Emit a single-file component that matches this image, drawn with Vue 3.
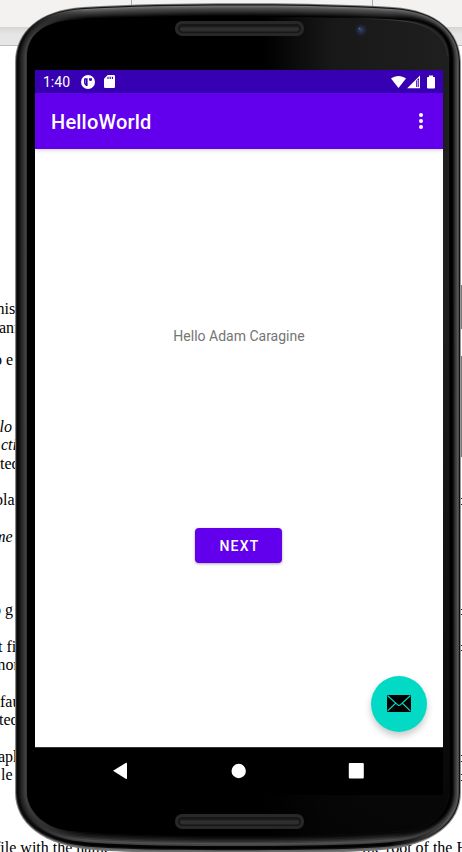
<script setup>
// Document lines: text, gap above the line, horizontal offset, italic flag
const lines = [
  { t: 'this', g: 0, x: -8 },
  { t: 'ann', g: 0, x: -1 },
  { t: 'o e', g: 14, x: -6 },
  { t: 'llo', g: 48, x: -5, i: true },
  { t: 'cti', g: 0, x: 1, i: true },
  { t: 'ted', g: 0, x: 0 },
  { t: 'pla', g: 18, x: -5 },
  { t: 'me', g: 18, x: -6, i: true },
  { t: 'o g', g: 55, x: -7 },
  { t: 't fi', g: 18, x: -2 },
  { t: 'mor', g: 0, x: -7 },
  { t: 'fau', g: 18, x: 0 },
  { t: 'ted', g: 0, x: -1 },
  { t: 'apk', g: 18, x: -2 },
  { t: 'le', g: 0, x: 1 },
]
const marks = [498, 504, 609, 614, 645, 650, 755, 761, 774, 780]

// Half outline of the body; the other half is mirrored around x = 238
const outer = [[15,62],[15.5,32],[38,10],[83,7],[133,4],[180,3.2],[238,3.2],[15,793],[15.5,822],[40,847],[100,850.5],[140,853],[190,853],[238,853]]
const inner = [[27,57],[27,36],[42,22],[73,20],[120,18],[180,16.5],[238,16.5],[27,793],[28,812],[45,829],[73,831],[120,835],[180,836],[238,836]]

function outline(k) {
  const p = outer.map(([x, y], n) => [x + (inner[n][0] - x) * k, y + (inner[n][1] - y) * k])
  const s = (n) => p[n].map((v) => v.toFixed(2)).join(' ')
  const m = (n) => `${(476 - p[n][0]).toFixed(2)} ${p[n][1].toFixed(2)}`
  return `M${s(0)}C${s(1)} ${s(2)} ${s(3)}C${s(4)} ${s(5)} ${s(6)}C${m(5)} ${m(4)} ${m(3)}C${m(2)} ${m(1)} ${m(0)}L${m(7)}C${m(8)} ${m(9)} ${m(10)}C${m(11)} ${m(12)} ${m(13)}C${s(12)} ${s(11)} ${s(10)}C${s(9)} ${s(8)} ${s(7)}Z`
}

const left = ['#888', '#222', '#080808', '#0c0c0c', '#141414', '#1d1d1d', '#252525', '#2b2b2b', '#333', '#3b3b3b', '#424242', '#393939']
const right = ['#999', '#111', '#484848', '#555', '#444', '#393939', '#272727', '#151515', '#050505', '#000', '#000', '#080808']
const top = ['#777', '#151515', '#737373', '#606060', '#505050', '#444', '#3a3a3a', '#303030', '#242424', '#191919', '#0b0b0b', '#000']
const bottom = ['#777', '#666', '#111', '#000', '#050505', '#444', '#505050', '#3b3b3b', '#282828', '#1b1b1b', '#101010', '#070707']
const rings = left.map((l, n) => ({ n, d: outline(n / 12), l, r: right[n], t: top[n], b: bottom[n] }))
const face = outline(1)
</script>

<template>
  <main class="stage">
    <div class="document">
      <div class="ribbon"><i class="tick"></i><i class="tick second"></i></div>
      <div class="ruler"></div>
      <div class="page">
        <p v-for="(l, n) in lines" :key="n" :class="{ italic: l.i }" :style="{ marginTop: l.g + 'px', marginLeft: l.x + 'px' }">{{ l.t }}</p>
        <div class="last"><span>file with the name</span><span>the root of the H</span></div>
      </div>
    </div>

    <section class="phone">
      <svg class="shell" width="462" height="852" viewBox="0 0 462 852">
        <defs>
          <clipPath id="upper"><rect width="462" height="426" /></clipPath>
          <clipPath id="lower"><rect y="426" width="462" height="426" /></clipPath>
          <template v-for="r in rings" :key="r.n">
            <linearGradient :id="'u' + r.n" gradientUnits="userSpaceOnUse" x1="15" x2="461" y1="0" y2="0">
              <stop offset=".02" :stop-color="r.l" /><stop offset=".16" :stop-color="r.t" /><stop offset=".84" :stop-color="r.t" /><stop offset=".97" :stop-color="r.r" />
            </linearGradient>
            <linearGradient :id="'d' + r.n" gradientUnits="userSpaceOnUse" x1="15" x2="461" y1="0" y2="0">
              <stop offset=".02" :stop-color="r.l" /><stop offset=".16" :stop-color="r.b" /><stop offset=".84" :stop-color="r.b" /><stop offset=".97" :stop-color="r.r" />
            </linearGradient>
          </template>
          <linearGradient id="glassTop" x1="0" x2="1" y1="0" y2="0">
            <stop offset=".56" stop-color="#000" /><stop offset=".72" stop-color="#181818" /><stop offset="1" stop-color="#1f1f1f" />
          </linearGradient>
          <linearGradient id="fade" x1="0" x2="0" y1="0" y2="1">
            <stop offset=".3" stop-color="#000" stop-opacity="0" /><stop offset="1" stop-color="#000" stop-opacity=".8" />
          </linearGradient>
          <linearGradient id="edge" x1="0" x2="1" y1="0" y2="0">
            <stop offset="0" stop-color="#444" stop-opacity="0" /><stop offset=".6" stop-color="#444" /><stop offset="1" stop-color="#333" />
          </linearGradient>
          <linearGradient id="bar" x1="0" x2="0" y1="0" y2="1">
            <stop offset="0" stop-color="#181818" /><stop offset=".45" stop-color="#303030" /><stop offset="1" stop-color="#2c2c2c" />
          </linearGradient>
          <radialGradient id="lens"><stop offset="0" stop-color="#344469" /><stop offset=".5" stop-color="#222a45" /><stop offset="1" stop-color="#1b1b20" /></radialGradient>
        </defs>
        <rect x="460" y="285" width="3" height="44" fill="#777" />
        <rect x="460" y="356" width="3" height="101" fill="#777" />
        <rect v-for="y in marks" :key="y" x="461" :y="y" width="1" height="1" fill="#222" />
        <g clip-path="url(#upper)"><path v-for="r in rings" :key="r.n" :d="r.d" :fill="`url(#u${r.n})`" /></g>
        <g clip-path="url(#lower)"><path v-for="r in rings" :key="r.n" :d="r.d" :fill="`url(#d${r.n})`" /></g>
        <path :d="face" fill="url(#glassTop)" />
        <path :d="face" fill="url(#fade)" />
        <path d="M330 17.5C365 18 385 19 403 21C431 24 446 37 448 56" fill="none" stroke="url(#edge)" stroke-width=".8" />
        <g v-for="y in [21, 814]" :key="y">
          <rect x="175" :y="y" width="129" height="15" rx="7" fill="#282828" />
          <rect x="178" :y="y + 3" width="123" height="9" rx="4.5" fill="#171717" />
          <rect x="180" :y="y + 5" width="119" height="5.5" rx="2.7" fill="url(#bar)" />
        </g>
        <circle cx="361" cy="30" r="6" fill="url(#lens)" />
        <circle cx="359.5" cy="28.5" r="1" fill="#52678b" />
      </svg>

      <div class="screen">
        <header class="status">
          <span class="clock">1:40</span>
          <svg class="badge" width="14" height="14" viewBox="0 0 14 14">
            <circle cx="7" cy="7" r="7" fill="#fff" />
            <path d="M3 4.2Q3 3.2 4 3.2H6.6V11H5.2Q3 9.8 3 7.6ZM8 3.2H11V4.6A1.5 1.5 0 0 1 8 4.6Z" fill="#3700b3" />
            <path d="M4.4 4.6V8.4" stroke="#9b80d9" stroke-width=".8" />
          </svg>
          <svg class="card" width="11" height="13" viewBox="0 0 11 13">
            <path d="M3.7 0H9.8Q11 0 11 1.2V11.8Q11 13 9.8 13H1.2Q0 13 0 11.8V3.7Z" fill="#fff" />
            <path d="M4 1.8V4M6.2 1.8V4M8.4 1.8V4" stroke="#3700b3" stroke-width="1.1" />
          </svg>
          <svg class="signals" width="45" height="14" viewBox="0 0 45 14">
            <path d="M0 3.5C4.3 0 10.7 0 15 3.5L7.5 13Z" fill="#fff" />
            <path d="M29 .5V13.3H16.2Z" fill="#fff" />
            <path d="M25.2 5.8L28 3V12H25.2Z" fill="#3700b3" />
            <path d="M26.8 5V12" stroke="#fff" stroke-width=".9" />
            <path d="M38 .5H42V2H43.2Q44 2 44 2.8V12.6Q44 13.4 43.2 13.4H36.8Q36 13.4 36 12.6V2.8Q36 2 36.8 2H38Z" fill="#fff" />
          </svg>
        </header>
        <div class="appbar">
          <h1>HelloWorld</h1>
          <div class="more"><i></i><i></i><i></i></div>
        </div>
        <div class="content">
          <p class="greeting">Hello Adam Caragine</p>
          <button class="next">NEXT</button>
          <button class="fab" aria-label="Email">
            <svg width="24" height="17" viewBox="0 0 24 17">
              <rect width="24" height="17" rx="1" fill="#000" />
              <path d="M.7 .8L10.4 9.6Q12 11 13.6 9.6L23.3 .8M.7 15.9L8.6 8.2M23.3 15.9L15.4 8.2" fill="none" stroke="#03dac5" stroke-width="1.2" />
            </svg>
          </button>
        </div>
        <nav class="nav">
          <svg width="408" height="48" viewBox="0 0 408 48">
            <path d="M78 23.8L90.7 16Q92 15.5 92 16.7V31Q92 32.3 90.7 31.7Z" fill="#fff" />
            <circle cx="203.7" cy="24" r="7.2" fill="#fff" />
            <rect x="313.8" y="16" width="15" height="15.5" rx="1" fill="#fff" />
          </svg>
        </nav>
      </div>
    </section>
  </main>
</template>

<style>
body { margin: 0; background: #fff; }
</style>

<style scoped>
.stage { position: relative; width: 462px; height: 852px; overflow: hidden; background: #fff; font-family: Roboto, sans-serif; }
.document { height: 852px; display: flex; flex-direction: column; }
.ribbon { height: 27px; flex: none; background: #f3f2f1; display: flex; }
.tick { width: 1px; height: 12px; background: #aaa; margin-left: 131px; }
.second { margin-left: 240px; }
.ruler { height: 18px; flex: none; background: linear-gradient(#d5d5d5, #e6e6e6 40%); border-bottom: 1px solid #bdbdbd; }
.page { padding-top: 254px; font-family: "Liberation Serif", serif; font-size: 16px; line-height: 18.5px; color: #000; }
.page p { margin: 0; height: 18.5px; white-space: nowrap; }
.page .italic { font-style: italic; }
.last { display: flex; justify-content: space-between; height: 18px; margin: 54px -6px 0 -5px; white-space: nowrap; }
.phone { position: absolute; inset: 0; padding: 70px 19px 57px 35px; box-sizing: border-box; }
.shell { position: absolute; inset: 0; display: block; }
.screen { position: relative; width: 408px; height: 725px; display: flex; flex-direction: column; background: #fff; }
.status { height: 23px; flex: none; display: flex; align-items: center; background: #3700b3; color: #fff; padding: 0 7px 0 8px; }
.clock { font-size: 14px; line-height: 23px; width: 28px; padding-top: 2px; }
.badge { margin-left: 10px; }
.card { margin-left: 9px; }
.signals { margin-left: auto; }
.appbar { height: 56px; flex: none; display: flex; align-items: center; justify-content: space-between; background: #6200ee; padding: 0 20px 0 16px; box-shadow: 0 1px 4px rgba(0, 0, 0, .2); }
h1 { margin: 2px 0 0; color: #fff; font-size: 20px; line-height: 24px; font-weight: 500; letter-spacing: .2px; }
.more { display: flex; flex-direction: column; gap: 2px; }
.more i { width: 4px; height: 4px; border-radius: 50%; background: #fff; }
.content { flex: 1; display: flex; flex-direction: column; align-items: center; padding-top: 177px; }
.greeting { margin: 0; font-size: 14px; line-height: 20px; color: #757575; }
button { border: 0; padding: 0; flex: none; box-sizing: border-box; }
.next { width: 87px; height: 35px; margin: 182px 1px 0 0; padding-left: 2px; border-radius: 4px; background: #6200ee; color: #fff; font: 500 14px/37px Roboto, sans-serif; letter-spacing: 1.25px; box-shadow: 0 1px 3px rgba(0, 0, 0, .34); }
.fab { width: 56px; height: 56px; margin: 112.5px 16px 0 0; align-self: flex-end; border-radius: 50%; display: flex; align-items: center; justify-content: center; background: #03dac5; box-shadow: 0 4px 7px rgba(0, 0, 0, .22); }
.nav { height: 47px; flex: none; background: #000; border-top: 1px solid #333; overflow: hidden; }
.nav svg { display: block; margin-top: -1px; }
</style>
